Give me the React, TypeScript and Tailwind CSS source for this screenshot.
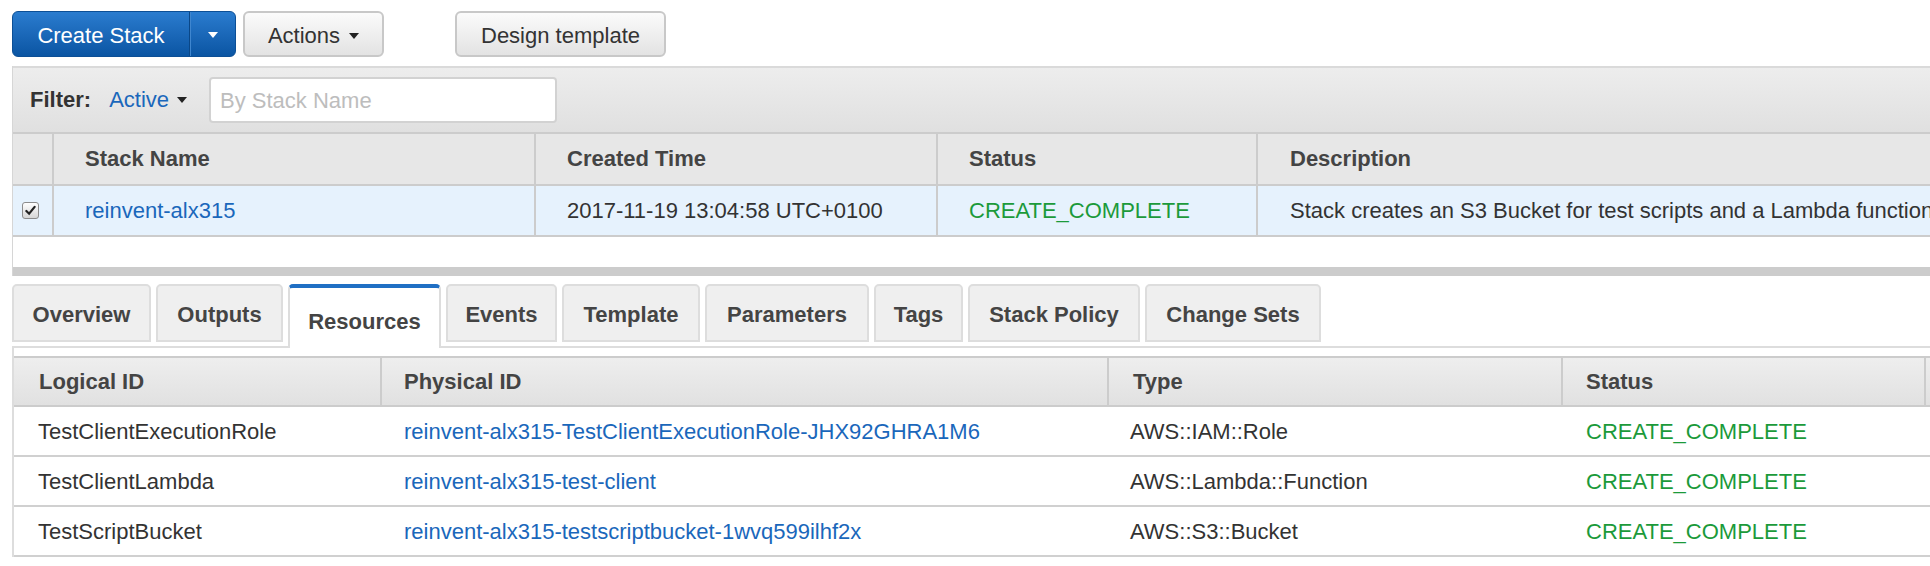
import React from "react";

function Caret({ className }: { className?: string }) {
  return (
    <span
      className={
        "inline-block h-0 w-0 border-x-[5px] border-t-[6px] border-x-transparent " + (className ?? "border-t-[#222]")
      }
    />
  );
}

function GrayButton({ className, children }: { className?: string; children: React.ReactNode }) {
  return (
    <button
      className={
        "flex h-[46px] items-center justify-center gap-[9px] rounded-[6px] border-2 border-[#c8c8c8] bg-linear-to-b from-[#fbfbfb] to-[#e3e3e3] pt-[3px] text-[#333] " +
        className
      }
    >
      {children}
    </button>
  );
}

function Toolbar() {
  return (
    <div className="flex items-center pl-[12px] pt-[11px]">
      <div className="flex h-[46px] overflow-hidden rounded-[6px] border border-[#0c4f96] bg-linear-to-b from-[#2a7ccf] to-[#0a55a3] text-white">
        <span className="flex w-[176px] items-center justify-center pt-[3px]">Create Stack</span>
        <span className="w-px bg-[#0a4787]" />
        <span className="w-px bg-[#3f86cf]" />
        <span className="flex w-[44px] items-center justify-center pt-[2px]">
          <Caret className="border-t-white" />
        </span>
      </div>
      <GrayButton className="ml-[7px] w-[141px]">
        Actions
        <Caret />
      </GrayButton>
      <GrayButton className="ml-[71px] w-[211px]">Design template</GrayButton>
    </div>
  );
}

function Checkbox() {
  return (
    <div className="flex h-[17px] w-[17px] items-center justify-center rounded-[3px] border border-[#8c8c8c] bg-linear-to-b from-white to-[#d6d6d6]">
      <svg viewBox="0 0 12 12" className="h-[11px] w-[11px]">
        <path d="M1.5 6.5 L4.5 9.5 L10.5 2" fill="none" stroke="#222" strokeWidth="2.4" strokeLinecap="round" />
      </svg>
    </div>
  );
}

function StackList() {
  const cols = "grid grid-cols-[41px_482px_402px_320px_1fr]";
  return (
    <div className="ml-[12px] mt-[9px] border-l border-[#d6d6d6]">
      <div className="flex h-[66px] items-center border-t-2 border-[#dadada] bg-linear-to-b from-[#ededed] to-[#e0e0e0] pl-[17px]">
        <span className="font-bold text-[#333]">Filter:</span>
        <span className="ml-[18px] flex items-center gap-[8px] text-[#1a67bb]">
          Active
          <Caret />
        </span>
        <div className="ml-[22px] flex h-[46px] w-[348px] items-center rounded-[4px] border-2 border-[#d2d2d2] bg-white pl-[9px] pt-[2px] text-[#bdbdbd]">
          By Stack Name
        </div>
      </div>
      <div className={cols + " h-[54px] border-y-2 border-[#cccccc] bg-[#e7e7e7] font-bold text-[#444]"}>
        <div className="border-r-2 border-[#cccccc]" />
        <div className="flex items-center border-r-2 border-[#cccccc] pl-[31px]">Stack Name</div>
        <div className="flex items-center border-r-2 border-[#cccccc] pl-[31px]">Created Time</div>
        <div className="flex items-center border-r-2 border-[#cccccc] pl-[31px]">Status</div>
        <div className="flex items-center pl-[32px]">Description</div>
      </div>
      <div className={cols + " h-[51px] border-b-2 border-[#cccccc] bg-[#e6f2fd]"}>
        <div className="flex items-center border-r-2 border-[#cccccc] pl-[9px]">
          <Checkbox />
        </div>
        <div className="flex items-center border-r-2 border-[#cccccc] pl-[31px] text-[#1a67bb]">reinvent-alx315</div>
        <div className="flex items-center border-r-2 border-[#cccccc] pl-[31px] text-[#333]">2017-11-19 13:04:58 UTC+0100</div>
        <div className="flex items-center border-r-2 border-[#cccccc] pl-[31px] text-[#1b9a3a]">CREATE_COMPLETE</div>
        <div className="flex items-center overflow-hidden whitespace-nowrap pl-[32px] text-[#333]">
          Stack creates an S3 Bucket for test scripts and a Lambda function that runs the test client
        </div>
      </div>
      <div className="h-[30px] bg-white" />
      <div className="h-[9px] bg-[#cccccc]" />
    </div>
  );
}

const tabs = [
  { label: "Overview", w: "w-[139px]" },
  { label: "Outputs", w: "w-[127px]" },
  { label: "Resources", w: "w-[153px]", active: true },
  { label: "Events", w: "w-[111px]" },
  { label: "Template", w: "w-[138px]" },
  { label: "Parameters", w: "w-[164px]" },
  { label: "Tags", w: "w-[89px]" },
  { label: "Stack Policy", w: "w-[172px]" },
  { label: "Change Sets", w: "w-[176px]" },
];

function Tabs() {
  return (
    <div className="ml-[12px] mt-[8px] flex h-[62px] items-start gap-[5px]">
      {tabs.map((t) =>
        t.active ? (
          <div
            key={t.label}
            className={`relative z-10 flex h-[64px] items-center justify-center rounded-t-[5px] border-x-2 border-t-[4px] border-x-[#dddddd] border-t-[#1f6fc4] bg-white pt-[8px] font-bold text-[#444] ${t.w}`}
          >
            {t.label}
          </div>
        ) : (
          <div
            key={t.label}
            className={`flex h-[58px] items-center justify-center rounded-t-[5px] border-2 border-[#dddddd] bg-[#efefef] pt-[3px] font-bold text-[#444] ${t.w}`}
          >
            {t.label}
          </div>
        )
      )}
    </div>
  );
}

const resources = [
  {
    logical: "TestClientExecutionRole",
    physical: "reinvent-alx315-TestClientExecutionRole-JHX92GHRA1M6",
    type: "AWS::IAM::Role",
  },
  { logical: "TestClientLambda", physical: "reinvent-alx315-test-client", type: "AWS::Lambda::Function" },
  { logical: "TestScriptBucket", physical: "reinvent-alx315-testscriptbucket-1wvq599ilhf2x", type: "AWS::S3::Bucket" },
];

function ResourcesTable() {
  const cols = "grid grid-cols-[368px_727px_454px_363px_1fr]";
  return (
    <div className="ml-[12px] border-l-2 border-t-2 border-[#dddddd] pt-[8px]">
      <div className={cols + " h-[51px] border-y-2 border-[#cccccc] bg-linear-to-b from-[#eeeeee] to-[#e1e1e1] font-bold text-[#444]"}>
        <div className="flex items-center border-r-2 border-[#cccccc] pl-[25px]">Logical ID</div>
        <div className="flex items-center border-r-2 border-[#cccccc] pl-[22px]">Physical ID</div>
        <div className="flex items-center border-r-2 border-[#cccccc] pl-[24px]">Type</div>
        <div className="flex items-center border-r-2 border-[#cccccc] pl-[23px]">Status</div>
        <div />
      </div>
      {resources.map((r) => (
        <div key={r.logical} className={cols + " h-[50px] border-b-2 border-[#d0d0d0] pt-[2px] text-[#333]"}>
          <div className="flex items-center pl-[24px]">{r.logical}</div>
          <div className="flex items-center pl-[22px] text-[#1a67bb]">{r.physical}</div>
          <div className="flex items-center pl-[21px]">{r.type}</div>
          <div className="flex items-center pl-[23px] text-[#1b9a3a]">CREATE_COMPLETE</div>
          <div />
        </div>
      ))}
    </div>
  );
}

export default function App() {
  return (
    <div className="h-[566px] w-[1930px] overflow-hidden bg-white font-['Liberation_Sans',Arial,Helvetica,sans-serif] text-[22px] leading-none text-[#333]">
      <Toolbar />
      <StackList />
      <Tabs />
      <ResourcesTable />
    </div>
  );
}
